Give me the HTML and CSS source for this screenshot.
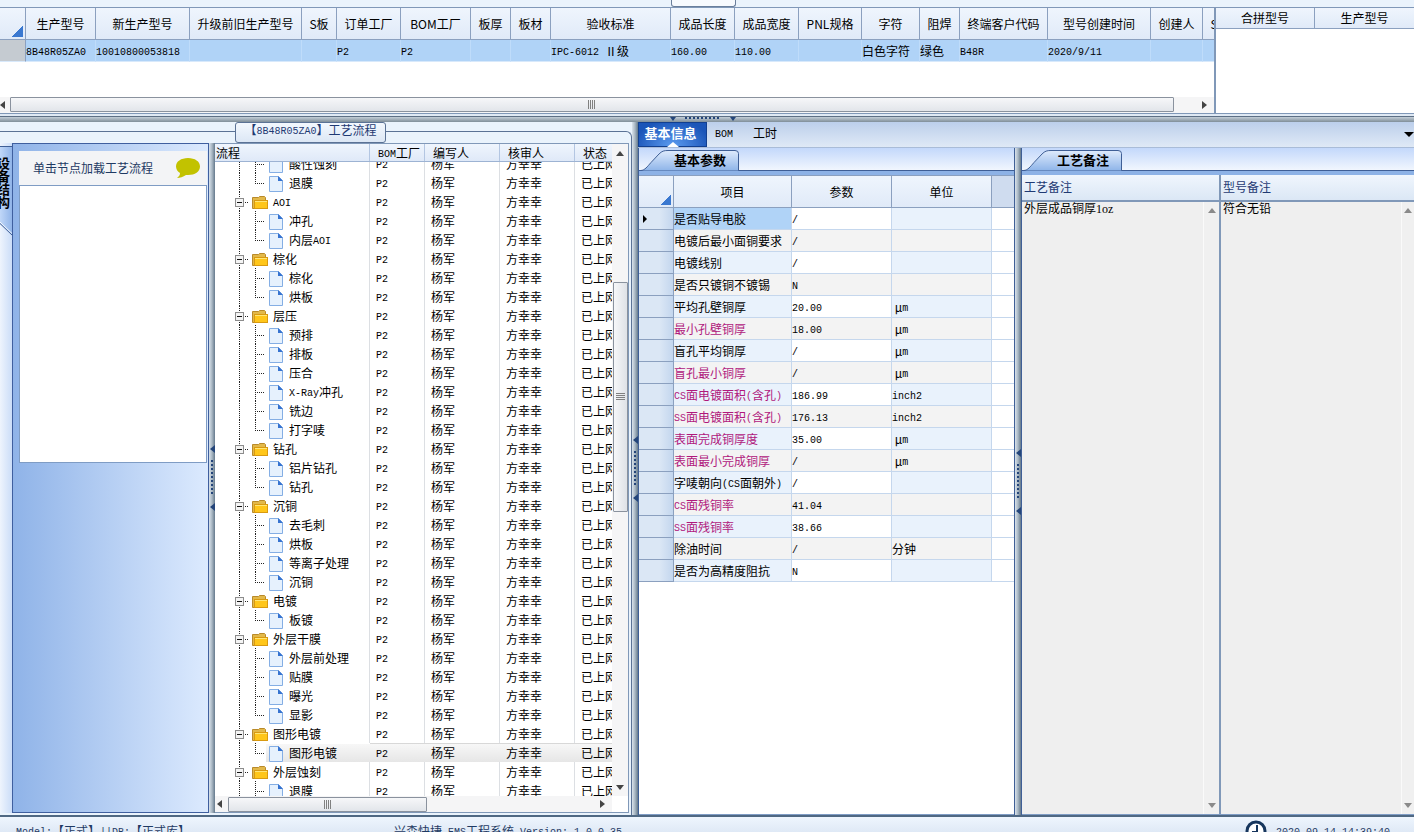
FILE: index.html
```html
<!DOCTYPE html>
<html lang="zh-CN">

<head>
    <meta charset="UTF-8">
    <title>EMS工程系统</title>
    <link rel="stylesheet" href="styles.css">
</head>

<body>
    <div class="top-strip"><span class="top-tab"></span></div>

    <section class="top">
        <div class="models">
            <div class="models-view">
                <table class="grid" id="models"></table>
            </div>
            <div class="hscroll">
                <span class="arrow left"></span>
                <span class="thumb models-thumb"><i></i></span>
                <span class="arrow right"></span>
            </div>
        </div>
        <div class="merge">
            <table class="grid merge-grid">
                <tr>
                    <th>合拼型号</th>
                    <th>生产型号</th>
                </tr>
            </table>
        </div>
    </section>

    <div class="split-h"><span class="grip-h"></span></div>

    <main>
        <section class="flow">
            <h2 class="flow-title" id="flowTitle"></h2>
            <div class="flow-body">
                <div class="side-tabs">
                    <svg class="side-shape" width="13" height="94" viewBox="0 0 13 94">
                        <defs>
                            <linearGradient id="sideFill" x1="0" x2="1" y1="0" y2="0">
                                <stop offset="0" stop-color="#c0d7f8" />
                                <stop offset="1" stop-color="#8fb3e8" />
                            </linearGradient>
                        </defs>
                        <path d="M0 3H12.5V92.5L0 80.5Z" fill="url(#sideFill)" />
                        <path d="M0 3.5H13" fill="none" stroke="#3f5f96" />
                        <path d="M0 80.5L12.5 92.5" fill="none" stroke="#3f5f96" />
                        <path d="M0 79L12.5 91" fill="none" stroke="#f4f8fe" />
                    </svg>
                    <a class="side-label" href="#structure">设备结构</a>
                </div>
                <div class="structure" id="structure">
                    <div class="structure-head">
                        <span>单击节点加载工艺流程</span>
                        <svg width="26" height="22" viewBox="0 0 26 22">
                            <path d="M13 1C20 1 25 4.5 25 9.5S20 18 13 18L11 18C8 20 5 21 2 21C4 19.5 5 18 5 16C2.5 14.5 1 12 1 9.5C1 4.5 6 1 13 1Z" fill="#c2c200" />
                        </svg>
                    </div>
                    <div class="structure-box"></div>
                </div>
                <div class="split-v"><span class="grip-v"></span></div>
                <div class="tree">
                    <div class="tree-main">
                        <div class="tree-row tree-head">
                            <span>流程</span><span id="treeBom"></span><span>编写人</span><span>核审人</span><span>状态</span>
                        </div>
                        <div class="tree-view">
                            <div id="tree"></div>
                        </div>
                        <div class="hscroll">
                            <span class="arrow left"></span>
                            <span class="thumb tree-thumb"><i></i></span>
                            <span class="arrow right"></span>
                        </div>
                    </div>
                    <div class="vscroll">
                        <span class="arrow up"></span>
                        <span class="thumb"><i></i></span>
                        <span class="arrow down"></span>
                    </div>
                </div>
            </div>
        </section>

        <div class="split-v"><span class="grip-v"></span></div>

        <div class="detail">
            <nav class="tabs">
                <button class="active">基本信息</button>
                <button><span class="en">BOM</span></button>
                <button>工时</button>
                <span class="tabs-more"></span>
            </nav>
            <div class="detail-body">
                <section class="pane params">
                    <div class="pane-tabs">
                        <svg class="pane-shape" width="102" height="22" viewBox="0 0 102 22">
                            <defs>
                                <linearGradient id="tabFill" x1="0" x2="0" y1="0" y2="1">
                                    <stop offset="0" stop-color="#dfebfc" />
                                    <stop offset="1" stop-color="#8fb5e9" />
                                </linearGradient>
                            </defs>
                            <path d="M2 21.5C6 21 8 18 12 13.5L20 5C23 2 25 1.5 29 1.5H96Q99.5 1.5 99.5 4.5V21.5" fill="url(#tabFill)" stroke="#3f5f96" />
                        </svg>
                        <h2>基本参数</h2>
                    </div>
                    <div class="pane-body">
                        <table class="grid" id="params"></table>
                    </div>
                </section>
                <div class="split-v"><span class="grip-v"></span></div>
                <section class="pane notes">
                    <div class="pane-tabs">
                        <svg class="pane-shape" width="102" height="22" viewBox="0 0 102 22">
                            <path d="M2 21.5C6 21 8 18 12 13.5L20 5C23 2 25 1.5 29 1.5H96Q99.5 1.5 99.5 4.5V21.5" fill="url(#tabFill)" stroke="#3f5f96" />
                        </svg>
                        <h2>工艺备注</h2>
                    </div>
                    <div class="pane-body notes-body">
                        <div class="note">
                            <label for="processNote">工艺备注</label>
                            <div class="note-text">
                                <textarea id="processNote" readonly>外层成品铜厚1oz</textarea>
                                <div class="vscroll off"><span class="arrow up"></span><span class="arrow down"></span></div>
                            </div>
                        </div>
                        <div class="note">
                            <label for="modelNote">型号备注</label>
                            <div class="note-text">
                                <textarea id="modelNote" readonly>符合无铅</textarea>
                                <div class="vscroll off"><span class="arrow up"></span><span class="arrow down"></span></div>
                            </div>
                        </div>
                    </div>
                </section>
            </div>
        </div>
    </main>

    <footer>
        <span class="status-model" id="statusModel"></span>
        <span class="status-version" id="statusVersion"></span>
        <svg width="22" height="22" viewBox="0 0 22 22">
            <circle cx="11" cy="11" r="9" fill="#fff" stroke="#17365d" stroke-width="3" />
            <path d="M12 5V12H7" fill="none" stroke="#17365d" stroke-width="2" />
        </svg>
        <span><time class="en">2020-09-14 14:39:40</time></span>
    </footer>

    <script src="script.js"></script>
</body>

</html>
```
FILE: styles.css
```css
* {
    box-sizing: border-box;
}

body {
    margin: 0;
    height: 100vh;
    display: flex;
    flex-direction: column;
    overflow: hidden;
    background: #eaf3fc;
    color: #000;
    font-family: "Noto Sans CJK SC", sans-serif;
    font-size: 12px;
    line-height: 18px;
}

/* half-width latin text next to full-width characters */
.en {
    font-family: "Liberation Mono", monospace;
    font-size: 10px;
    line-height: 1;
    vertical-align: 1px;
}

/* top grids */
.top-strip {
    flex: none;
    height: 7px;
    display: flex;
    justify-content: center;
    padding-right: 8px;
}

.top-tab {
    width: 65px;
    border: 1px solid #6a7f9c;
    border-top: none;
    border-radius: 0 0 3px 3px;
    background: #f7fafe;
}

.top {
    flex: none;
    display: flex;
    height: 107px;
    border-top: 1px solid #8098b8;
    border-bottom: 1px solid #8098b8;
    background: #fff;
}

.models {
    flex: 1;
    min-width: 0;
    display: flex;
    flex-direction: column;
}

.models-view {
    flex: 1;
    overflow: hidden;
}

.merge {
    flex: none;
    width: 200px;
    border-left: 2px solid #8098b8;
}

.grid {
    table-layout: fixed;
    border-collapse: separate;
    border-spacing: 0;
}

.grid th,
.grid td {
    padding: 0;
    overflow: hidden;
    white-space: nowrap;
}

.grid th {
    height: 32px;
    font-weight: normal;
    border-right: 1px solid #8ba0bf;
    border-bottom: 1px solid #8ba0bf;
    background: linear-gradient(#eff5fd, #e0eaf8);
}

.grid td {
    height: 22px;
    text-align: left;
}

#models {
    width: 1226px;
}

#models td {
    background: #b0d3f7;
    border-right: 1px solid #bfdcfa;
    border-bottom: 1px solid #d8e9fb;
}

#models td:first-child {
    background: #c5cbd1;
    border-right-color: #8ba0bf;
}

.grid .corner {
    vertical-align: bottom;
}

.corner::after {
    content: "";
    display: block;
    width: 11px;
    height: 11px;
    margin: 0 2px 2px auto;
    background: linear-gradient(135deg, transparent 50%, #3a78d0 50%);
}

.merge-grid {
    width: 100%;
}

.merge-grid th {
    height: 21px;
}

.merge-grid th:last-child {
    border-right: none;
}

/* scrollbars */
.hscroll {
    flex: none;
    display: flex;
    align-items: center;
    height: 16px;
    background: #f5f5f6;
}

.vscroll {
    flex: none;
    display: flex;
    flex-direction: column;
    align-items: center;
    width: 16px;
    background: #f5f5f6;
}

.arrow {
    flex: none;
    border: 4px solid transparent;
}

.arrow.left {
    border-width: 4px 5px 4px 0;
    border-right-color: #444;
}

.arrow.right {
    border-width: 4px 0 4px 5px;
    border-left-color: #444;
    margin-left: auto;
}

.arrow.up {
    border-width: 0 4px 5px;
    border-bottom-color: #444;
}

.arrow.down {
    border-width: 5px 4px 0;
    border-top-color: #444;
    margin-top: auto;
}

.thumb {
    display: flex;
    justify-content: center;
    align-items: center;
    border: 1px solid #8a929e;
    border-radius: 1px;
}

.hscroll .thumb {
    height: 15px;
    background: linear-gradient(#f6f7f9, #e2e5ea);
}

.hscroll .thumb i {
    width: 8px;
    height: 9px;
    background: repeating-linear-gradient(90deg, #808080 0 1px, transparent 1px 2px);
}

.models .hscroll {
    padding-bottom: 1px;
}

.models .arrow.right {
    margin-right: 7px;
}

.models-thumb {
    flex: 1;
    margin: 0 28px 0 5px;
}

/* splitters */
.split-h {
    flex: none;
    display: flex;
    justify-content: center;
    height: 8px;
    padding-right: 8px;
    border-top: 2px solid #dfe9f4;
    background: linear-gradient(#5d6f85 0 1px, #c3ced8 1px, #7f8e99);
}

.grip-h {
    display: flex;
    justify-content: space-between;
    width: 66px;
    height: 4px;
    margin-top: 1px;
    background: repeating-linear-gradient(90deg, #24457a 0 2px, transparent 2px 4px) center top / 36px 2px no-repeat;
}

.grip-h::before,
.grip-h::after {
    content: "";
    border: 3px solid transparent;
    border-top: 4px solid #24457a;
    border-bottom: 0;
}

.split-v {
    flex: none;
    display: flex;
    flex-direction: column;
    justify-content: center;
    align-items: center;
    width: 6px;
    background: linear-gradient(90deg, #d9e3ec, #a9b7c3 50%, #64798c);
}

.grip-v {
    display: flex;
    flex-direction: column;
    justify-content: space-between;
    width: 5px;
    height: 66px;
    background: repeating-linear-gradient(#24457a 0 2px, transparent 2px 4px) center / 2px 36px no-repeat;
}

.grip-v::before,
.grip-v::after {
    content: "";
    width: 0;
    border: 4px solid transparent;
    border-right: 5px solid #24457a;
    border-left: 0;
}

/* process flow */
main {
    flex: 1;
    min-height: 0;
    display: flex;
    border-bottom: 2px solid #4f6883;
}

.flow {
    flex: none;
    position: relative;
    display: flex;
    flex-direction: column;
    width: 632px;
    margin-top: 9px;
    padding: 11px 2px 2px 0;
    border: 1px solid #5b7295;
    border-left: none;
    border-bottom: none;
    border-radius: 0 6px 0 0;
}

/* sits over the top border of the group */
.flow-title {
    position: absolute;
    top: -10px;
    left: 235px;
    width: 151px;
    height: 21px;
    margin: 0;
    font-size: 12px;
    font-weight: normal;
    line-height: 14px;
    text-align: center;
    color: #1f3a73;
    border: 1px solid #5b7295;
    border-radius: 3px;
    background: linear-gradient(#f3f8fe, #dce7f5);
}

.flow-body {
    flex: 1;
    min-height: 0;
    display: flex;
}

.side-tabs {
    flex: none;
    position: relative;
    width: 12px;
    overflow: hidden;
    background: linear-gradient(90deg, #eef4fd, #cbddf8);
}

.side-shape {
    display: block;
}

.side-label {
    position: absolute;
    top: 14px;
    right: 2px;
    writing-mode: vertical-rl;
    font-size: 13px;
    font-weight: bold;
    line-height: 14px;
    color: #000;
    text-decoration: none;
}

.structure {
    flex: none;
    width: 197px;
    padding: 7px 1px 0 6px;
    border: 1px solid #3f5f9f;
    background: linear-gradient(90deg, #8fb3e8, #dceafe);
}

.structure-head {
    display: flex;
    justify-content: space-between;
    align-items: center;
    height: 34px;
    padding: 0 6px 0 14px;
    color: #1f3a63;
    background: #f3f4f6;
}

.structure-box {
    height: 278px;
    border: 1px solid #7f9cc4;
    background: #fff;
}

.tree {
    flex: 1;
    min-width: 0;
    display: flex;
    border: 1px solid #8098b8;
    border-left: none;
    background: #fff;
}

.tree-main {
    flex: 1;
    min-width: 0;
    display: flex;
    flex-direction: column;
}

.tree-row {
    display: grid;
    grid-template-columns: 155px 55px 75px 75px 1fr;
    height: 19px;
    overflow: hidden;
    white-space: nowrap;
}

.tree-row > span {
    padding-left: 6px;
    border-right: 1px solid #dcdfe3;
}

.tree-row > span:last-child {
    border-right: none;
}

.tree-head {
    flex: none;
    height: 18px;
    line-height: 17px;
    border-bottom: 1px solid #9db3d3;
    background: linear-gradient(#eff5fd, #dfe9f8);
}

.tree-head > span {
    padding-left: 8px;
    border-right-color: #b3c6e2;
}

.tree-head > span:first-child {
    padding-left: 1px;
}

.tree-view {
    flex: 1;
    overflow: hidden;
}

/* scrolled part of a row */
#tree {
    margin-top: -8px;
    line-height: 19px;
}

.tree-row > .node {
    display: flex;
    padding-left: 17px;
}

.node svg {
    flex: none;
}

.tree-row.selected > span {
    border-right: none;
    background: linear-gradient(#f7f7f7, #e6e6e6);
    border-top: 1px solid #d8d8d8;
    border-bottom: 1px solid #d8d8d8;
    line-height: 17px;
}

.tree-row.selected > .node {
    background: linear-gradient(#f7f7f7, #e6e6e6) 51px 0 no-repeat;
    border-color: transparent;
}

.tree-row.selected svg {
    margin-top: -1px;
}

.tree .hscroll {
    padding: 0 7px 0 2px;
}

.tree-thumb {
    width: 199px;
    margin-left: 6px;
}

.tree .vscroll {
    margin-bottom: 16px;
    padding: 7px 0 6px;
}

.vscroll .thumb {
    width: 15px;
    height: 230px;
    margin-top: 126px;
    background: linear-gradient(90deg, #f6f7f9, #dfe2e7);
}

.vscroll .thumb i {
    width: 9px;
    height: 8px;
    background: repeating-linear-gradient(#808080 0 1px, transparent 1px 2px);
}

/* detail panel */
.detail {
    flex: 1;
    min-width: 0;
    display: flex;
    flex-direction: column;
}

.tabs {
    flex: none;
    display: flex;
    align-items: center;
    height: 26px;
    border-bottom: 1px solid #a9bcd8;
    background: linear-gradient(#bccfeb, #dfe9f6);
}

.tabs button {
    height: 25px;
    margin: 0;
    padding: 0 12px 3px 8px;
    border: none;
    background: none;
    font-family: inherit;
    font-size: 12px;
    line-height: 18px;
}

.tabs .active {
    position: relative;
    width: 69px;
    padding: 0 4px 3px 0;
    font-size: 13px;
    font-weight: bold;
    color: #fff;
    border: 1px solid #123f8f;
    background: radial-gradient(at bottom, #5c9cf0, #1b55b8 80%);
}

.active::after {
    content: "";
    position: absolute;
    left: 28px;
    bottom: -1px;
    border: 6px solid transparent;
    border-top: 0;
    border-bottom: 5px solid #fff;
}

.tabs-more {
    margin: 0 0 0 auto;
    border: 5px solid transparent;
    border-top-color: #000;
    border-bottom: 0;
}

.detail-body {
    flex: 1;
    min-height: 0;
    display: flex;
}

.pane {
    flex: 1;
    min-width: 0;
    display: flex;
    flex-direction: column;
    border-left: 1px solid #3f5f96;
}

.params {
    flex: 0 0 377px;
    border-right: 1px solid #3f5f96;
}

.pane-tabs {
    flex: none;
    display: flex;
    position: relative;
    height: 23px;
    padding-top: 1px;
    border-bottom: 1px solid #3f5f96;
    background: linear-gradient(#c3d8fb, #f1f6fe);
}

.pane-shape {
    flex: none;
    margin-bottom: -1px;
}

.pane-tabs h2 {
    position: absolute;
    left: 35px;
    top: 3px;
    margin: 0;
    font-size: 13px;
    line-height: 18px;
}

.pane-body {
    flex: 1;
    min-height: 0;
    overflow: hidden;
    border-top: 4px solid #8db2e6;
    border-bottom: 1px solid #7f9cc4;
    background: #fff;
}

#params {
    width: 376px;
    border-top: 1px solid #8ba0bf;
}

#params th:last-child {
    background: #cfdcef;
    border-right: none;
}

#params td {
    border-right: 1px solid #c5d7ed;
    border-bottom: 1px solid #c5d7ed;
    background: #fff;
}

#params td:nth-child(2),
#params td:nth-child(4) {
    background: #e9f2fc;
}

#params tr:nth-child(odd) td:nth-child(n+2):nth-child(-n+4) {
    background: #f3f3f3;
}

#params tr td:first-child {
    padding-left: 4px;
    border-right-color: #8ba0bf;
    border-bottom-color: #8ba0bf;
    background: linear-gradient(90deg, #dbe7f5 60%, #c3d6ee);
}

#params td:last-child {
    border-right: none;
}

#params .current td:nth-child(2) {
    background: #b0d3f7;
}

.current td:first-child::after {
    content: "";
    display: block;
    width: 0;
    border: 4px solid transparent;
    border-left-color: #000;
    border-right: 0;
}

#params .key td:nth-child(2) {
    color: #b0187c;
}

.notes-body {
    display: flex;
}

.note {
    flex: 1;
    min-width: 0;
    display: flex;
    flex-direction: column;
}

.note:first-child {
    flex: 0 0 197px;
}

.note + .note {
    border-left: 2px solid #8098b8;
}

.note label {
    height: 27px;
    padding: 3px 2px 0;
    color: #1f3a73;
    border-bottom: 2px solid #8098b8;
    background: linear-gradient(#f0f6fd, #dbe7f5);
}

.note-text {
    flex: 1;
    display: flex;
    min-height: 0;
}

.note textarea {
    flex: 1;
    min-width: 0;
    margin: 0;
    padding: 0 2px;
    border: none;
    resize: none;
    background: #efefef;
    color: #000;
    font-family: "Liberation Serif", "Noto Sans CJK SC", serif;
    font-size: 12px;
    line-height: 14px;
}

.vscroll.off {
    padding: 6px 0;
    border-left: 1px solid #fafafa;
    background: #f0f0f0;
}

.off .arrow.up {
    border-bottom-color: #8a8a8a;
}

.off .arrow.down {
    border-top-color: #8a8a8a;
}

.note:last-child .vscroll {
    width: 13px;
}

/* status bar */
footer {
    flex: none;
    display: flex;
    height: 15px;
    padding: 3px 24px 0 16px;
    overflow: hidden;
    color: #1f3a63;
    background: linear-gradient(#eef5fd, #dfe9f6);
}

footer > span {
    padding-top: 2px;
    white-space: nowrap;
}

.status-model {
    width: 378px;
}

footer svg {
    flex: none;
    margin: 0 9px 0 auto;
}
```
FILE: script.js
```js
// wraps latin runs so they take half-width cells
function mix(text) {
    return text.replace(/[\x20-\x7e]+/g, '<span class="en">$&</span>');
}

const modelColumns = [
    ['', 26, ''],
    ['生产型号', 70, '8B48R05ZA0'],
    ['新生产型号', 94, '10010800053818'],
    ['升级前旧生产型号', 112, ''],
    ['S板', 35, ''],
    ['订单工厂', 64, 'P2'],
    ['BOM工厂', 70, 'P2'],
    ['板厚', 40, ''],
    ['板材', 40, ''],
    ['验收标准', 120, 'IPC-6012 Ⅱ级'],
    ['成品长度', 64, '160.00'],
    ['成品宽度', 64, '110.00'],
    ['PNL规格', 63, ''],
    ['字符', 58, '白色字符'],
    ['阻焊', 40, '绿色'],
    ['终端客户代码', 88, 'B48R'],
    ['型号创建时间', 103, '2020/9/11'],
    ['创建人', 52, ''],
    ['S', 23, '']
];

document.getElementById('models').innerHTML =
    '<colgroup>' + modelColumns.map(c => `<col style="width:${c[1]}px">`).join('') + '</colgroup>' +
    '<tr>' + modelColumns.map((c, i) => `<th${i ? '' : ' class="corner"'}>${c[0]}</th>`).join('') + '</tr>' +
    '<tr>' + modelColumns.map(c => `<td>${mix(c[2])}</td>`).join('') + '</tr>';

// name, value, unit, key parameter
const params = [
    ['是否贴导电胶', '/', ''],
    ['电镀后最小面铜要求', '/', ''],
    ['电镀线别', '/', ''],
    ['是否只镀铜不镀锡', 'N', ''],
    ['平均孔壁铜厚', '20.00', 'μm'],
    ['最小孔壁铜厚', '18.00', 'μm', true],
    ['盲孔平均铜厚', '/', 'μm'],
    ['盲孔最小铜厚', '/', 'μm', true],
    ['CS面电镀面积(含孔)', '186.99', 'inch2', true],
    ['SS面电镀面积(含孔)', '176.13', 'inch2', true],
    ['表面完成铜厚度', '35.00', 'μm', true],
    ['表面最小完成铜厚', '/', 'μm', true],
    ['字唛朝向(CS面朝外)', '/', ''],
    ['CS面残铜率', '41.04', '', true],
    ['SS面残铜率', '38.66', '', true],
    ['除油时间', '/', '分钟'],
    ['是否为高精度阻抗', 'N', '']
];

document.getElementById('params').innerHTML =
    '<colgroup>' + [35, 118, 100, 100, 23].map(w => `<col style="width:${w}px">`).join('') + '</colgroup>' +
    '<tr><th class="corner"></th><th>项目</th><th>参数</th><th>单位</th><th></th></tr>' +
    params.map((p, i) => {
        const name = (i ? '' : 'current ') + (p[3] ? 'key' : '');
        const unit = p[2] === 'μm' ? '\u00a0' + p[2] : p[2];
        return `<tr class="${name}"><td></td><td>${mix(p[0])}</td><td>${mix(p[1])}</td><td>${mix(unit)}</td><td></td></tr>`;
    }).join('');

const flow = [
    [null, ['酸性蚀刻', '退膜']],
    ['AOI', ['冲孔', '内层AOI']],
    ['棕化', ['棕化', '烘板']],
    ['层压', ['预排', '排板', '压合', 'X-Ray冲孔', '铣边', '打字唛']],
    ['钻孔', ['铝片钻孔', '钻孔']],
    ['沉铜', ['去毛刺', '烘板', '等离子处理', '沉铜']],
    ['电镀', ['板镀']],
    ['外层干膜', ['外层前处理', '贴膜', '曝光', '显影']],
    ['图形电镀', ['图形电镀']],
    ['外层蚀刻', ['退膜', '']]
];

const folderIcon = `<svg width="41" height="19" viewBox="0 0 41 19">
    <path d="M7.5 0V19M13 10.5H17" stroke="#222" stroke-dasharray="1 1" />
    <rect x="3.5" y="6.5" width="8" height="8" fill="#f4f4f4" stroke="#8c8c8c" />
    <path d="M5 10.5H10" stroke="#111" />
    <path d="M20.5 16.5V5.5H26.5L27.5 4.5H32.5L33.5 5.5V16.5Z" fill="#e2b84a" stroke="#b98a2a" />
    <rect x="22.5" y="8.5" width="13" height="8" fill="#ffc61a" stroke="#d99a10" />
    <path d="M23 9.5H35" stroke="#ffe676" />
</svg>`;

function pageIcon(last) {
    return `<svg width="57" height="19" viewBox="0 0 57 19">
    <path d="M7.5 0V19M23.5 0V${last ? 11 : 19}M23 10.5H33" stroke="#222" stroke-dasharray="1 1" />
    <path d="M37.5 3.5H46.5L50.5 7.5V18.5H37.5Z" fill="#e6f1fd" stroke="#84aee4" />
    <path d="M46 3L51 8H46Z" fill="#3673d0" />
</svg>`;
}

function treeRow(icon, name, selected) {
    return `<div class="tree-row${selected ? ' selected' : ''}"><span class="node">${icon}<span>${mix(name)}</span></span>` +
        `<span>${mix('P2')}</span><span>杨军</span><span>方幸幸</span><span>已上网</span></div>`;
}

document.getElementById('tree').innerHTML = flow.map(([name, steps]) =>
    (name ? treeRow(folderIcon, name) : '') +
    steps.filter(s => s).map((s, i) => treeRow(pageIcon(i === steps.length - 1), s, name && s === '图形电镀')).join('')
).join('');

document.getElementById('flowTitle').innerHTML = mix('【8B48R05ZA0】工艺流程');
document.getElementById('treeBom').innerHTML = mix('BOM工厂');
document.getElementById('statusModel').innerHTML = mix('Model:【正式】||DB:【正式库】');
document.getElementById('statusVersion').innerHTML = mix('兴森快捷 EMS工程系统 Version: 1.0.0.35');
```
